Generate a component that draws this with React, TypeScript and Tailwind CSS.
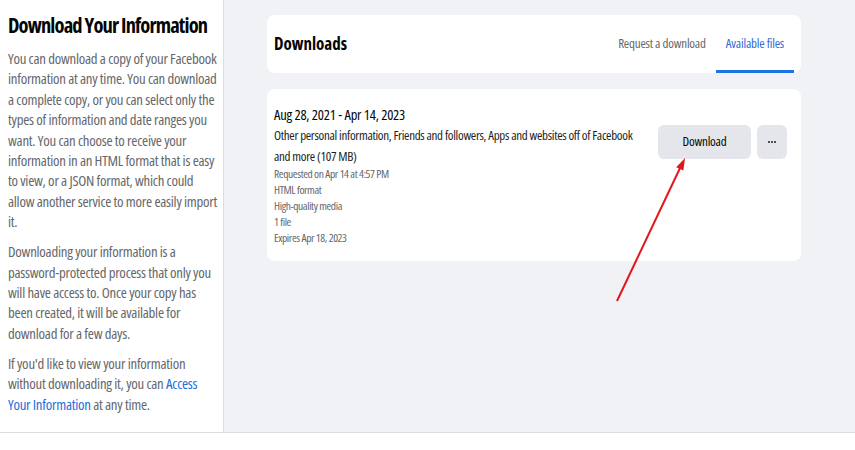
import React from 'react';

const details = [
  'Requested on Apr 14 at 4:57 PM',
  'HTML format',
  'High-quality media',
  '1 file',
  'Expires Apr 18, 2023',
];

function Sidebar() {
  return (
    <aside className="w-[224px] shrink-0 bg-white border-r border-[#dadde1] pl-2 pt-[11px] text-[#65676b]">
      <h1 className="text-[20.5px] leading-7 font-bold text-[#050505] tracking-[-0.85px] whitespace-nowrap">
        Download Your Information
      </h1>
      <div className="mt-[9px] text-[14.8px] leading-[20.4px] tracking-[-0.25px] whitespace-nowrap space-y-[9.5px]">
        <p>
          You can download a copy of your Facebook
          <br />
          information at any time. You can download
          <br />
          a complete copy, or you can select only the
          <br />
          types of information and date ranges you
          <br />
          want. You can choose to receive your
          <br />
          information in an HTML format that is easy
          <br />
          to view, or a JSON format, which could
          <br />
          allow another service to more easily import
          <br />
          it.
        </p>
        <p>
          Downloading your information is a
          <br />
          password-protected process that only you
          <br />
          will have access to. Once your copy has
          <br />
          been created, it will be available for
          <br />
          download for a few days.
        </p>
        <p>
          If you'd like to view your information
          <br />
          without downloading it, you can <a href="#" className="text-[#216fdb]">Access</a>
          <br />
          <a href="#" className="text-[#216fdb]">Your Information</a> at any time.
        </p>
      </div>
    </aside>
  );
}

function TabsCard() {
  return (
    <div className="h-[58px] bg-white rounded-lg flex items-stretch justify-between pl-[7px] pr-[7px]">
      <h2 className="self-center text-[17px] font-bold text-[#050505]">Downloads</h2>
      <div className="flex items-stretch text-[13px] tracking-[-0.2px]">
        <button className="px-[10px] pt-[3px] text-[#65676b] border-b-[3px] border-transparent">Request a download</button>
        <button className="px-[10px] pt-[3px] text-[#2d6bd3] border-b-[3px] border-[#1b74e4]">Available files</button>
      </div>
    </div>
  );
}

function FileCard() {
  return (
    <div className="h-[172px] bg-white rounded-lg flex pl-[7px] pr-[14px] pt-[16px]">
      <div className="w-[372px] text-[#050505]">
        <div className="text-[14.5px] leading-5 tracking-[-0.2px]">Aug 28, 2021 - Apr 14, 2023</div>
        <div className="text-[13px] leading-[21px] tracking-[-0.3px] text-[#1c1e21]">
          Other personal information, Friends and followers, Apps and websites off of Facebook and more (107 MB)
        </div>
        <div className="-mt-[1px] text-[11.5px] leading-4 tracking-[-0.4px] text-[#65676b]">
          {details.map((d) => (
            <div key={d}>{d}</div>
          ))}
        </div>
      </div>
      <div className="ml-auto mt-[20px] flex gap-[6px] h-[34px]">
        <button className="w-[93px] rounded-md bg-[#e4e6eb] text-[13px] text-[#050505] tracking-[-0.2px]">
          Download
        </button>
        <button className="w-[30px] rounded-md bg-[#e4e6eb] flex items-center justify-center gap-px">
          <span className="w-[2px] h-[2px] rounded-full bg-[#1c1e21]" />
          <span className="w-[2px] h-[2px] rounded-full bg-[#1c1e21]" />
          <span className="w-[2px] h-[2px] rounded-full bg-[#1c1e21]" />
        </button>
      </div>
    </div>
  );
}

export default function App() {
  return (
    <div className="relative w-[855px] h-[450px] bg-white font-['Open_Sans',sans-serif] [font-stretch:75%]">
      <div className="flex h-[433px] border-b border-[#dadde1]">
        <Sidebar />
        <main className="flex-1 bg-[#f0f2f5] pl-[43px] pr-[54px] pt-[15px]">
          <TabsCard />
          <div className="mt-4">
            <FileCard />
          </div>
        </main>
      </div>
      <svg className="absolute inset-0 pointer-events-none" width="855" height="450">
        <line x1="617" y1="301" x2="681" y2="166" stroke="#e3161b" strokeWidth="2" />
        <polygon points="685,158 683.4,170.6 676.2,167.2" fill="#e3161b" />
      </svg>
    </div>
  );
}
